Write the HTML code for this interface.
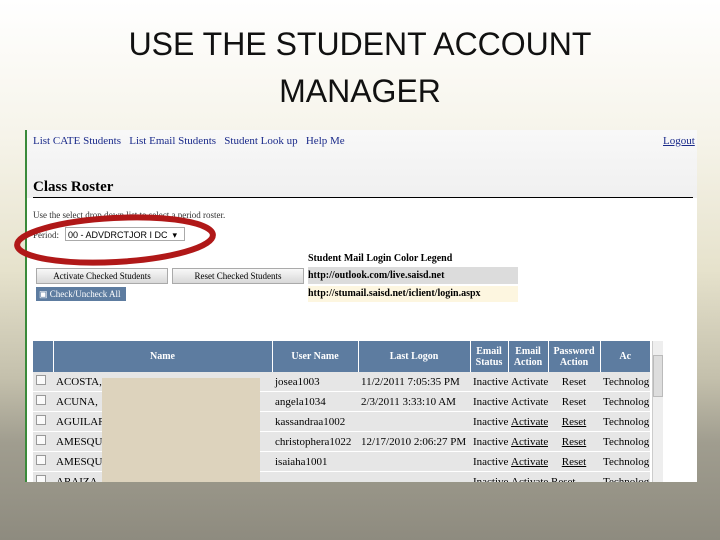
<!DOCTYPE html><html><head><style>
body{margin:0;width:720px;height:540px;overflow:hidden;background:linear-gradient(#ffffff 0%,#f6f4ea 25%,#e6e2cc 50%,#c4c0ac 70%,#a09d8f 82%,#8e8b7f 100%);font-family:"Liberation Serif",serif;position:relative}
.t{position:absolute;left:0;width:720px;text-align:center;font-family:"Liberation Sans",sans-serif;font-size:32px;color:#111;line-height:40px}
.s{position:absolute;left:25px;top:130px;width:672px;height:352px;background:#fff;overflow:hidden;border-left:2px solid #3a8a3a;box-sizing:border-box}
.nav{position:absolute;left:0;top:0;width:672px;height:68px;background:linear-gradient(#f8f8f8,#f0f0f0)}
.a{position:absolute;font-size:11px;color:#1a2a8a;white-space:nowrap}
.ab{position:absolute;white-space:nowrap}
table{border-collapse:collapse;position:absolute;left:6px;top:211px;font-size:11px;table-layout:fixed;width:617px}
td{height:19px;border-bottom:1px solid #fff;padding:0 3px;white-space:nowrap;overflow:hidden;background:#e6e6e6}
th{background:#5d7ca0;color:#fff;font-size:10px;height:31px;border-right:1px solid #fff;padding:0}
.cb{display:inline-block;width:8px;height:8px;border:1px solid #999;background:#fafafa}
</style></head><body>
<div class="t" style="top:24px">USE THE STUDENT ACCOUNT</div>
<div class="t" style="top:71px">MANAGER</div>
<div class="s">
<div class="nav"></div>
<div class="a" style="left:6px;top:5px">List CATE Students &nbsp;&nbsp;List Email Students &nbsp;&nbsp;Student Look up &nbsp;&nbsp;Help Me</div>
<div class="a" style="left:636px;top:5px;text-decoration:underline">Logout</div>
<div class="ab" style="left:6px;top:49px;font-size:15px;font-weight:bold">Class Roster</div>
<div style="position:absolute;left:6px;top:67px;width:660px;height:1px;background:#000"></div>
<div class="ab" style="left:6px;top:80px;font-size:9px;color:#333">Use the select drop down list to select a period roster.</div>
<div class="ab" style="left:6px;top:100px;font-size:9px;color:#333">Period:</div>
<div class="ab" style="left:38px;top:97px;width:120px;height:14px;border:1px solid #aaa;font-family:'Liberation Sans',sans-serif;font-size:9px;line-height:14px;padding-left:2px;box-sizing:border-box">00 - ADVDRCTJOR I DC &nbsp;▾</div>
<div class="ab" style="left:281px;top:123px;font-size:10px;font-weight:bold">Student Mail Login Color Legend</div>
<div class="ab" style="left:281px;top:137px;width:210px;height:17px;background:#dcdcdc;font-size:10px;font-weight:bold;line-height:17px">http://outlook.com/live.saisd.net</div>
<div class="ab" style="left:281px;top:156px;width:210px;height:16px;background:#fdf6e0;font-size:10px;font-weight:bold;line-height:16px">http://stumail.saisd.net/iclient/login.aspx</div>
<div class="ab" style="left:9px;top:138px;width:130px;height:14px;background:linear-gradient(#f8f8f8,#d8d8d8);border:1px solid #aaa;font-size:9px;text-align:center;line-height:14px">Activate Checked Students</div>
<div class="ab" style="left:145px;top:138px;width:130px;height:14px;background:linear-gradient(#f8f8f8,#d8d8d8);border:1px solid #aaa;font-size:9px;text-align:center;line-height:14px">Reset Checked Students</div>
<div class="ab" style="left:9px;top:157px;width:90px;height:14px;background:#5d7ca0;color:#fff;font-size:9px;line-height:14px;padding-left:3px;box-sizing:border-box">▣ Check/Uncheck All</div>
<table>
<colgroup><col style="width:20px"><col style="width:219px"><col style="width:86px"><col style="width:112px"><col style="width:38px"><col style="width:40px"><col style="width:52px"><col style="width:50px"></colgroup>
<tr><th></th><th>Name</th><th>User Name</th><th>Last Logon</th><th>Email<br>Status</th><th>Email<br>Action</th><th>Password<br>Action</th><th style="border-right:0">Ac</th></tr>
<tr><td><span class="cb"></span></td><td>ACOSTA,</td><td>josea1003</td><td>11/2/2011 7:05:35 PM</td><td>Inactive</td><td>Activate</td><td style="text-align:center">Reset</td><td>Technolog</td></tr>
<tr><td><span class="cb"></span></td><td>ACUNA,</td><td>angela1034</td><td>2/3/2011 3:33:10 AM</td><td>Inactive</td><td>Activate</td><td style="text-align:center">Reset</td><td>Technolog</td></tr>
<tr><td><span class="cb"></span></td><td>AGUILAR</td><td>kassandraa1002</td><td></td><td>Inactive</td><td><u>Activate</u></td><td style="text-align:center"><u>Reset</u></td><td>Technolog</td></tr>
<tr><td><span class="cb"></span></td><td>AMESQU</td><td>christophera1022</td><td>12/17/2010 2:06:27 PM</td><td>Inactive</td><td><u>Activate</u></td><td style="text-align:center"><u>Reset</u></td><td>Technolog</td></tr>
<tr><td><span class="cb"></span></td><td>AMESQU</td><td>isaiaha1001</td><td></td><td>Inactive</td><td><u>Activate</u></td><td style="text-align:center"><u>Reset</u></td><td>Technolog</td></tr>
<tr><td><span class="cb"></span></td><td>ARAIZA</td><td>…</td><td></td><td>Inactive</td><td>Activate</td><td>Reset</td><td>Technolog</td></tr>
</table>
<div class="ab" style="left:625px;top:211px;width:10px;height:141px;background:#eee;border-left:1px solid #ccc"></div>
<div class="ab" style="left:626px;top:225px;width:8px;height:40px;background:#ddd;border:1px solid #bbb"></div>
<div class="ab" style="left:75px;top:248px;width:158px;height:110px;background:#ddd3bd"></div>
</div>
<svg style="position:absolute;left:0;top:0" width="720" height="540"><ellipse cx="115" cy="240" rx="98" ry="22" fill="none" stroke="#b01818" stroke-width="6" transform="rotate(-3 115 240)"/></svg>
</body></html>
